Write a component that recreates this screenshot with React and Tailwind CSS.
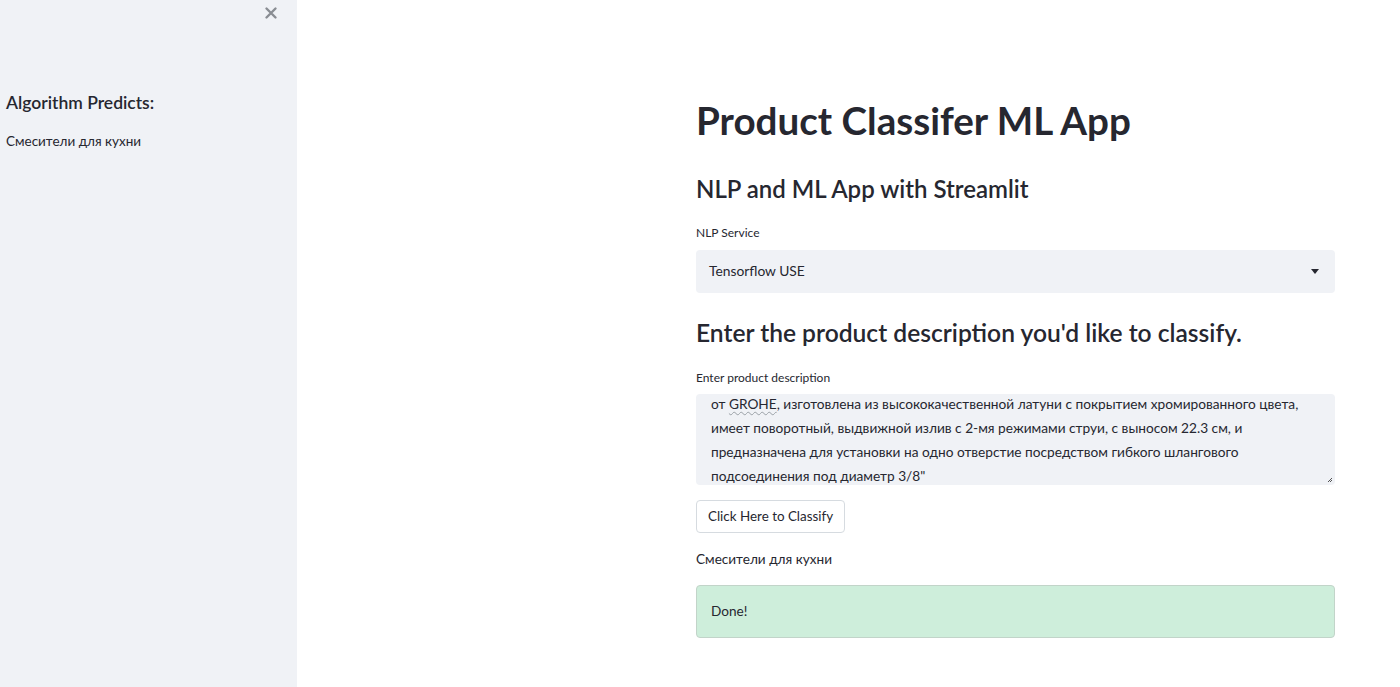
export default function App() {
  return (
    <div className="h-[687px] w-[1400px] flex bg-white text-[#262730] overflow-hidden" style={{ fontFamily: "Lato, 'Noto Sans', sans-serif" }}>
      {/* Sidebar */}
      <div className="w-[297px] h-full bg-[#f0f2f6] relative px-[6px]">
        <button className="absolute left-[262px] top-[4px] text-[#8a8d93]">
          <svg width="18" height="18" viewBox="0 0 24 24" fill="none" stroke="currentColor" strokeWidth="3.2" strokeLinecap="round">
            <path d="M6 6l12 12M18 6L6 18" />
          </svg>
        </button>
        <h3 className="mt-[91px] text-[17.5px] font-semibold leading-[24px]">Algorithm Predicts:</h3>
        <p className="mt-[16px] text-[13.5px] leading-[20px]">Смесители для кухни</p>
      </div>

      {/* Main */}
      <div className="flex-1">
        <div className="ml-[399px] w-[639px] pt-[96px]">
          <h1 className="text-[38.6px] font-bold leading-[48px]">Product Classifer ML App</h1>
          <h2 className="mt-[29px] text-[24px] font-semibold leading-[32px]">NLP and ML App with Streamlit</h2>

          <label className="block mt-[20px] text-[12px] leading-[16px]">NLP Service</label>
          <div className="mt-[9px] h-[43px] rounded bg-[#f0f2f6] flex items-center justify-between pl-[13px] pr-[16px]">
            <span className="text-[13.8px]">Tensorflow USE</span>
            <svg width="8" height="5" viewBox="0 0 8 5"><path d="M0 0h8L4 5z" fill="#262730" /></svg>
          </div>

          <h2 className="mt-[24px] text-[24.6px] font-semibold leading-[32px]">Enter the product description you'd like to classify.</h2>

          <label className="block mt-[21px] text-[12px] leading-[16px]">Enter product description</label>
          <div className="mt-[8px] h-[91px] rounded bg-[#f0f2f6] relative overflow-hidden pl-[15px] pr-[10px]">
            <div className="text-[13.7px] leading-[24px] -mt-[2px]">
              <p>
                от <span className="underline decoration-wavy decoration-[#9aa0a6] decoration-1 underline-offset-2">GROHE</span>, изготовлена из высококачественной латуни с покрытием хромированного цвета,
              </p>
              <p>имеет поворотный, выдвижной излив с 2-мя режимами струи, с выносом 22.3 см, и</p>
              <p>предназначена для установки на одно отверстие посредством гибкого шлангового</p>
              <p>подсоединения под диаметр 3/8"</p>
            </div>
            <svg className="absolute right-[2px] bottom-[2px]" width="6" height="6" viewBox="0 0 6 6">
              <path d="M5 1L1 5M5 3L3 5" stroke="#555" strokeWidth="1" />
            </svg>
          </div>

          <button className="mt-[15px] h-[33px] px-[11px] rounded border border-[#d6dbe0] bg-white text-[13.4px]">Click Here to Classify</button>

          <p className="mt-[16px] text-[13.6px] leading-[20px]">Смесители для кухни</p>

          <div className="mt-[16px] h-[53px] rounded bg-[#ceeedb] border border-[#c2d4c9] flex items-center pl-[14px] text-[13.6px]">Done!</div>
        </div>
      </div>
    </div>
  );
}
